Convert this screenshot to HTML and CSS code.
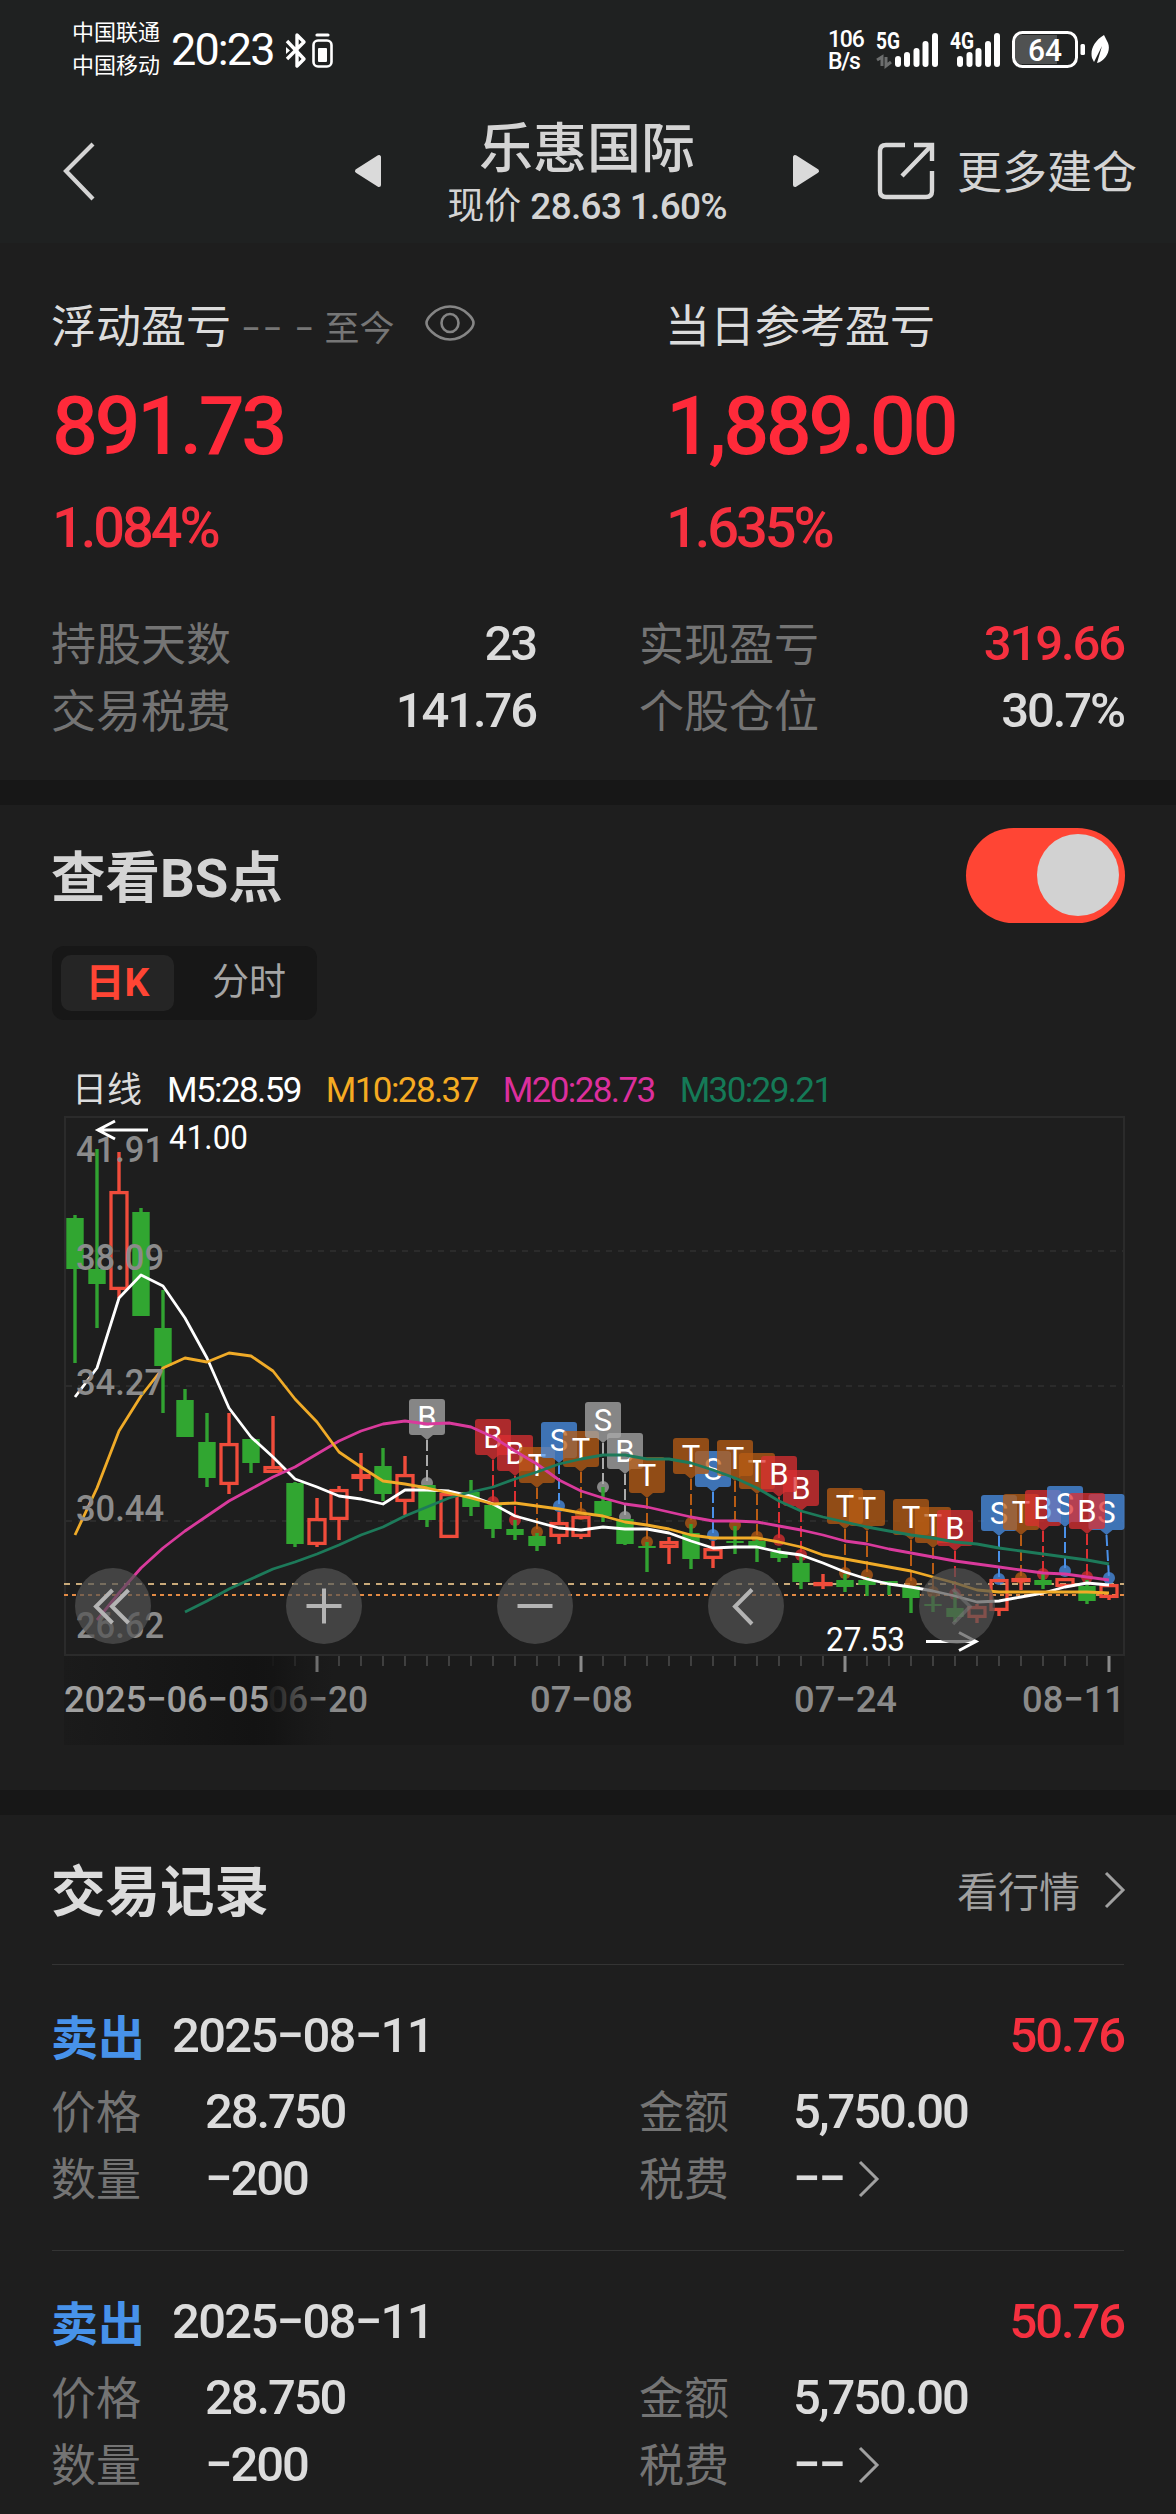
FILE: index.html
```html
<!DOCTYPE html>
<html lang="zh-CN">
<head>
<meta charset="utf-8">
<title>乐惠国际</title>
<link rel="stylesheet" href="styles.css">
</head>
<body>
<div class="page">
  <header class="top">
    <div class="status">
      <div class="carriers"><span>中国联通</span><span>中国移动</span></div>
      <span class="clock">20:23</span>
      <svg class="status-icons" width="50" height="38" viewBox="285 30 50 38" fill="none" stroke="#fff">
        <path d="M287 40 304 58 297 65V34L304 41 287 58" stroke-width="3.4" stroke-linejoin="round"/>
        <path d="M286 46v7l4-3.500z" fill="#fff" stroke="none"/>
        <rect x="313.500" y="39.500" width="18" height="26" rx="4.500" stroke-width="2.600"/>
        <path d="M317 34h11" stroke-width="3.200" stroke-linecap="round"/>
        <rect x="318" y="47" width="9" height="14" rx="1" fill="#fff" stroke="none"/>
      </svg>
      <div class="speed"><span>106</span><span>B/s</span></div>
      <svg class="signals" width="236" height="44" viewBox="874 27 236 44">
        <g fill="#fff">
          <text class="net" x="876" y="49" textLength="24" lengthAdjust="spacingAndGlyphs">5G</text>
          <text class="net" x="950" y="49" textLength="24" lengthAdjust="spacingAndGlyphs">4G</text>
          <g>
            <rect x="895" y="56" width="6" height="11" rx="3"/><rect x="904" y="52" width="6" height="15" rx="3"/><rect x="913.500" y="48" width="6" height="19" rx="3"/><rect x="922.500" y="41" width="6" height="26" rx="3"/><rect x="932" y="33" width="6" height="34" rx="3"/>
          </g>
          <g>
            <rect x="957" y="56" width="6" height="11" rx="3"/><rect x="966.500" y="52" width="6" height="15" rx="3"/><rect x="975.500" y="48" width="6" height="19" rx="3"/><rect x="985" y="41" width="6" height="26" rx="3"/><rect x="994" y="33" width="6" height="34" rx="3"/>
          </g>
          <rect x="1080.500" y="44" width="4.500" height="11" rx="1.500"/>
          <path d="M1104 35C1094 41 1090 50 1092 58L1094 62 1102 46 1097 63C1106 61 1111 50 1108 43Z"/>
        </g>
        <path d="M877 60l5-3v9M891 62l-5 4v-9" fill="none" stroke="#6c6e6e" stroke-width="3"/>
        <path d="M1022 35h35v29h-35q-8 0-8-8v-13q0-8 8-8" fill="#505252"/>
        <rect x="1013.500" y="32.500" width="63" height="34" rx="9" fill="none" stroke="#fff" stroke-width="3"/>
        <text class="level" x="1028" y="61" textLength="34" lengthAdjust="spacingAndGlyphs">64</text>
      </svg>
    </div>
    <nav class="nav">
      <svg width="36" height="60" viewBox="0 0 36 60" fill="none" stroke="#d4d4d4" stroke-width="4.200"><path d="M32 3 5 30 32 58"/></svg>
      <svg class="prev" width="28" height="34" viewBox="0 0 28 34" fill="#dadada" stroke="#dadada" stroke-width="4" stroke-linejoin="round"><path d="M25 3v28L3 17z"/></svg>
      <div class="title"><h1>乐惠国际</h1><p>现价 <span class="num">28.63 1.60%</span></p></div>
      <svg class="next" width="28" height="34" viewBox="0 0 28 34" fill="#dadada" stroke="#dadada" stroke-width="4" stroke-linejoin="round"><path d="M3 3v28L25 17z"/></svg>
      <svg class="share" width="60" height="60" viewBox="0 0 60 60" fill="none" stroke="#d8d8d8" stroke-width="4.400"><path d="M29 4H10Q4 4 4 10V50Q4 56 10 56H50Q56 56 56 50V30M38 4H56V20M56 4 26 35"/></svg>
      <span class="more">更多建仓</span>
    </nav>
  </header>

  <section class="summary">
    <div class="pnl">
      <div>
        <div class="pnl-label">浮动盈亏<span class="since"><span class="dash">−− −</span> 至今</span>
          <svg width="50" height="38" viewBox="0 0 50 38" fill="none" stroke="#858585" stroke-width="2.600"><path d="M1.500 19Q1.500 15 7 10 15 2.500 25 2.500T43 10Q48.500 15 48.500 19T43 28Q35 35.500 25 35.500T7 28Q1.500 23 1.500 19Z"/><ellipse cx="25" cy="19" rx="8.500" ry="9"/></svg>
        </div>
        <div class="amount num">891.73</div>
        <div class="rate num">1.084%</div>
      </div>
      <div>
        <div class="pnl-label">当日参考盈亏</div>
        <div class="amount num">1,889.00</div>
        <div class="rate num">1.635%</div>
      </div>
    </div>
    <dl class="stats">
      <div><dt>持股天数</dt><dd class="num">23</dd></div>
      <div><dt>实现盈亏</dt><dd class="num up">319.66</dd></div>
      <div><dt>交易税费</dt><dd class="num">141.76</dd></div>
      <div><dt>个股仓位</dt><dd class="num">30.7%</dd></div>
    </dl>
  </section>

  <section class="points">
    <div class="points-head"><h2>查看BS点</h2><div class="switch"><i></i></div></div>
    <div class="tabs"><span class="tab active">日K</span><span class="tab">分时</span></div>
    <div class="legend">
      <span class="l0">日线</span><span class="l5 num">M5:28.59</span><span class="l10 num">M10:28.37</span><span class="l20 num">M20:28.73</span><span class="l30 num">M30:29.21</span>
    </div>
    <svg class="chart" id="chart" width="1064" height="632" viewBox="64 1115 1064 632"></svg>
  </section>

  <section class="records">
    <div class="records-head"><h2>交易记录</h2><span class="quote">看行情</span>
      <svg width="22" height="38" viewBox="0 0 22 38" fill="none" stroke="#a0a0a0" stroke-width="3"><path d="M2 2 19 19 2 36"/></svg>
    </div>
    <article class="record">
      <div class="record-head"><b>卖出</b><span class="num date">2025−08−11</span><span class="num up">50.76</span></div>
      <dl>
        <dt>价格</dt><dd class="num">28.750</dd><dt>金额</dt><dd class="num">5,750.00</dd>
        <dt>数量</dt><dd class="num">−200</dd><dt>税费</dt><dd class="num">−−<svg width="22" height="38" viewBox="0 0 22 38" fill="none" stroke="#a0a0a0" stroke-width="3"><path d="M2 2 19 19 2 36"/></svg></dd>
      </dl>
    </article>
    <article class="record">
      <div class="record-head"><b>卖出</b><span class="num date">2025−08−11</span><span class="num up">50.76</span></div>
      <dl>
        <dt>价格</dt><dd class="num">28.750</dd><dt>金额</dt><dd class="num">5,750.00</dd>
        <dt>数量</dt><dd class="num">−200</dd><dt>税费</dt><dd class="num">−−<svg width="22" height="38" viewBox="0 0 22 38" fill="none" stroke="#a0a0a0" stroke-width="3"><path d="M2 2 19 19 2 36"/></svg></dd>
      </dl>
    </article>
  </section>
</div>
<script src="chart.js"></script>
</body>
</html>
```

FILE: styles.css
```css
* { box-sizing: border-box; margin: 0; padding: 0; }
body {
  background: #1e1e1e;
  color: #dcdcdc;
  font-family: Roboto, "Noto Sans CJK SC", sans-serif;
}
svg { display: block; flex: none; }
.page { width: 1176px; height: 2514px; overflow: hidden; }
.num { font-weight: 500; letter-spacing: -0.043em; }
.up { color: #f5303f; }

/* status bar and title */
.top { height: 243px; background: #1f2121; }
.status { display: flex; align-items: center; height: 98px; padding-left: 72px; color: #fff; }
.carriers { display: flex; flex-direction: column; font-size: 22px; line-height: 33px; width: 99px; }
.clock { width: 114px; font-size: 45px; line-height: 48px; padding-top: 2px; letter-spacing: -1.9px; }
.status-icons { margin-top: 2px; }
.speed { display: flex; flex-direction: column; margin-left: 493px; width: 46px; padding-top: 3px; font-size: 23px; line-height: 22px; font-weight: 500; letter-spacing: -1.2px; }
.net { font: 700 23px Roboto, sans-serif; }
.level { font: 500 32px Roboto, sans-serif; fill: #fff; }
.nav { display: flex; align-items: center; height: 145px; padding-left: 61px; color: #d4d4d4; }
.prev { margin-left: 257px; }
.title { width: 410px; text-align: center; padding-top: 13px; }
.title h1 { font-size: 54px; font-weight: 500; line-height: 60px; }
.title p { font-size: 37px; line-height: 54px; }
.title p .num { letter-spacing: -0.7px; }
.share { margin-left: 56px; }
.more { margin-left: 21px; padding-bottom: 2px; font-size: 45px; white-space: nowrap; }

/* profit summary */
.summary { padding: 52px 52px 36px; }
.pnl { display: grid; grid-template-columns: 614px 1fr; }
.pnl-label { display: flex; align-items: center; height: 60px; padding-bottom: 4px; font-size: 45px; text-indent: -1px; }
.since { margin: 4px 31px 0 11px; font-size: 35px; color: #767676; white-space: pre; }
.since .dash { letter-spacing: 1.5px; }
.amount { margin-top: 26px; font-size: 81px; line-height: 92px; height: 90px; color: #ff2a3a; }
.rate { margin-top: 27px; font-size: 56px; line-height: 60px; color: #f5303f; letter-spacing: -0.055em; }
.stats { display: grid; grid-template-columns: 484px 484px; column-gap: 104px; margin-top: 52px; }
.stats div { display: flex; justify-content: space-between; height: 67px; line-height: 67px; }
dt { height: 67px; line-height: 71px; font-size: 45px; color: #747474; text-indent: -1px; }
dd { font-size: 49px; }

/* trade point chart */
.points, .records { border-top: 25px solid #171717; }
.points { padding: 23px 51px 43px 52px; }
.points-head { display: flex; align-items: center; justify-content: space-between; height: 95px; }
h2 { padding-bottom: 4px; font-size: 54.5px; font-weight: 700; color: #d4d4d4; text-indent: -1px; }
.switch { width: 159px; height: 95px; padding: 6px; border-radius: 48px; background: #ff4534; display: flex; justify-content: flex-end; }
.switch i { width: 82px; height: 82px; border-radius: 50%; background: #d2d2d2; }
.tabs { display: flex; width: 265px; height: 74px; margin-top: 23px; padding: 9px; border-radius: 12px; background: #171717; }
.tab { width: 113px; height: 56px; border-radius: 10px; line-height: 56px; font-size: 37px; text-align: center; color: #a5a5a5; }
.tab + .tab { flex: 1; padding-left: 16px; }
.tab.active { background: #252525; color: #ff4534; font-size: 39px; font-weight: 700; }
.legend { display: flex; gap: 25px; height: 50px; margin-top: 45px; padding-left: 20px; line-height: 51px; font-size: 35px; }
.legend .num { font-weight: 400; letter-spacing: -1.6px; }
.l5 { color: #fff; }
.l10 { color: #f5ab22; }
.l20 { color: #dc2f9c; }
.l30 { color: #157a57; }
.chart { margin-left: 12px; font-family: Roboto, sans-serif; }

/* trades */
.records-head { display: flex; align-items: center; height: 149px; padding: 0 50px 0 52px; }
.records-head h2 { color: #dcdcdc; }
.quote { margin: 0 24px 2px auto; font-size: 41px; color: #a0a0a0; }
.record { height: 286px; margin: 0 52px; padding-top: 40px; border-top: 1px solid #343434; }
.record-head { display: flex; align-items: center; height: 60px; font-size: 49px; }
.record-head b { width: 120px; padding-bottom: 1px; font-size: 47px; color: #4792ea; text-indent: -1px; }
.record-head .up { margin-left: auto; }
.record-head .date { letter-spacing: -0.035em; }
.record dl { display: grid; grid-template-columns: 153px 435px 153px 1fr; margin-top: 13px; line-height: 67px; }
.record dd { display: flex; align-items: center; gap: 14px; height: 67px; }
```

FILE: chart.js
```js
const svg = document.getElementById('chart');
const X = i => 75 + 22 * i;
const out = [];
const line = (x1, y1, x2, y2, color, w, extra = '') =>
  out.push(`<line x1="${x1}" y1="${y1}" x2="${x2}" y2="${y2}" stroke="${color}" stroke-width="${w}" ${extra}/>`);
const text = (s, x, y, len, size, color, weight = 400) =>
  out.push(`<text x="${x}" y="${y}" font-size="${size}" font-weight="${weight}" fill="${color}" textLength="${len}" lengthAdjust="spacingAndGlyphs">${s}</text>`);

// frame and grid
out.push('<rect x="65" y="1117" width="1059" height="538" fill="none" stroke="#2b2b2b" stroke-width="2"/>');
[1251, 1386, 1521].forEach(y => line(66, y, 1123, y, '#2b2b2b', 2, 'stroke-dasharray="6 6"'));
line(64, 1584, 1124, 1584, '#c9aa7a', 2, 'stroke-dasharray="6 6"');
line(64, 1595, 1124, 1595, '#e38b45', 2, 'stroke-dasharray="4 4"');

// trade markers: index, letter, colour, top of tag, y of dot
const tint = { g: '#aaaaaa', r: '#dc2f32', o: '#b85c14', b: '#4a90e8' };
const marks = [
  [16,'B','g',1399,1483],[19,'B','r',1419,1502],[20,'B','r',1435,1520],[21,'T','o',1447,1532],
  [22,'S','b',1422,1506],[23,'T','o',1431,1514],[24,'S','g',1402,1487],[25,'B','g',1433,1517],
  [26,'T','o',1457,1542],[29,'S','b',1451,1535],[28,'T','o',1438,1523],[31,'T','o',1453,1537],
  [30,'T','o',1440,1525],[33,'B','r',1470,1555],[32,'B','r',1456,1540],[36,'T','o',1490,1575],
  [35,'T','o',1488,1573],[39,'T','o',1507,1592],[38,'T','o',1499,1583],[40,'B','r',1510,1594],
  [42,'S','b',1495,1579],[43,'T','o',1494,1578],[44,'B','r',1490,1574],[45,'S','b',1486,1571],
  [47,'S','b',1494,1578],[46,'B','r',1493,1577]
];
marks.forEach(([i, t, c, top, dot]) => {
  const x = X(i), bx = i === 47 ? x - 2.5 : x, f = tint[c], b = top + 36;
  line(bx, b + 5, x, dot, f, 2, 'stroke-dasharray="11 4"');
  out.push(`<circle cx="${x}" cy="${dot}" r="6" fill="${f}" opacity=".75"/>`);
  out.push(`<path d="M${bx-15} ${top}h30q3 0 3 3v30q0 3-3 3h-9l-6 5-6-5h-9q-3 0-3-3v-30q0-3 3-3z" fill="${f}" fill-opacity=".75"/>`);
  out.push(`<text x="${bx}" y="${top+28.5}" font-size="31" fill="#fff" text-anchor="middle">${t}</text>`);
});

// candles: colour, high, body top, body bottom, low
const candles = [
  ['g',1215,1218,1269,1363],['g',1149,1269,1284,1328],['r',1152,1191,1290,1298],['g',1208,1212,1316,1316],
  ['g',1290,1328,1366,1413],['g',1389,1400,1437,1437],['g',1413,1442,1478,1487],['r',1413,1443,1485,1494],
  ['g',1439,1439,1463,1473],['r',1416,1466,1473,1473],['g',1482,1483,1544,1547],['r',1498,1518,1545,1547],
  ['r',1486,1489,1520,1540],['r',1453,1474,1479,1491],['g',1448,1466,1494,1501],['r',1456,1474,1502,1515],
  ['g',1485,1485,1520,1527],['r',1493,1493,1538,1538],['g',1480,1492,1507,1516],['g',1505,1505,1529,1538],
  ['g',1520,1529,1535,1540],['g',1533,1536,1546,1551],['r',1512,1522,1537,1544],['r',1516,1516,1537,1539],
  ['g',1487,1501,1516,1522],['g',1519,1519,1544,1545],['g',1542,1546,1548,1572],['r',1537,1541,1548,1564],
  ['g',1524,1533,1559,1569],['r',1541,1548,1559,1568],['g',1526,1541,1543,1554],['g',1538,1541,1547,1562],
  ['g',1548,1552,1558,1562],['g',1556,1563,1582,1589],['r',1574,1582,1585,1589],['g',1574,1580,1587,1592],
  ['g',1577,1580,1585,1596],['g',1581,1581,1583,1595],['g',1586,1586,1598,1613],['g',1596,1604,1606,1612],
  ['g',1592,1608,1617,1622],['r',1604,1606,1618,1623],['r',1579,1579,1611,1616],['r',1578,1578,1581,1590],
  ['g',1574,1580,1585,1589],['r',1578,1578,1587,1587],['g',1580,1586,1601,1604],['r',1584,1584,1598,1600]
];
candles.forEach(([c, h, t, b, l], i) => {
  const x = X(i);
  if (c === 'g') {
    line(x, h, x, l, '#31a231', 3.4);
    out.push(`<rect x="${x-8.7}" y="${t}" width="17.4" height="${b-t}" fill="#31a631"/>`);
  } else {
    if (t > h) line(x, h, x, t, '#f04c3b', 3.4);
    if (l > b) line(x, b, x, l, '#f04c3b', 3.4);
    out.push(`<rect x="${x-8}" y="${t+1.6}" width="16" height="${Math.max(1, b-t-3.2)}" fill="none" stroke="#f04c3b" stroke-width="3.3"/>`);
  }
});

// moving averages
const curve = (start, ys, color) =>
  out.push(`<polyline points="${ys.map((y, k) => X(start + k) + ',' + y).join(' ')}" fill="none" stroke="${color}" stroke-width="2.8" stroke-linejoin="round"/>`);
curve(0, [1397,1368,1298,1275,1286,1318,1358,1408,1437,1457,1479,1487,1496,1499,1504,1490,1490,1491,1496,1504,1516,1522,1528,1530,1527,1529,1529,1533,1541,1548,1547,1547,1552,1555,1563,1572,1579,1584,1587,1591,1596,1602,1601,1597,1593,1587,1583,1585], '#fff');
curve(1, [1620,1593,1568,1548,1531,1516,1501,1489,1477,1467,1454,1441,1431,1424,1421,1424,1423,1427,1437,1451,1464,1480,1491,1498,1504,1507,1512,1517,1521,1521,1522,1526,1530,1535,1541,1544,1549,1553,1557,1561,1564,1567,1570,1573,1574,1577,1580], '#d93a9c');
curve(5, [1612,1601,1589,1579,1569,1562,1554,1545,1535,1527,1516,1507,1498,1492,1487,1479,1472,1464,1459,1455,1455,1459,1459,1463,1470,1478,1488,1501,1511,1517,1522,1527,1531,1535,1538,1542,1544,1548,1551,1554,1557,1560,1564], '#1d7a5a');
curve(0, [1535,1488,1431,1396,1368,1358,1362,1353,1356,1371,1399,1422,1452,1467,1481,1484,1488,1493,1498,1504,1503,1506,1509,1513,1516,1522,1525,1529,1535,1538,1538,1538,1542,1547,1555,1559,1563,1567,1571,1577,1583,1590,1592,1592,1592,1592,1592,1593], '#f0ab28');

// price scale and extremes
[['41.91',1162],['38.09',1270],['34.27',1395],['30.44',1521],['26.62',1638]].forEach(([s, y]) => text(s, 76, y, 88, 37, '#8b8b8b', 500));
text('41.00', 169, 1149, 79, 33, '#fff');
text('27.53', 826, 1651, 79, 33, '#fff');
out.push('<path d="M148 1130H98M115 1121 98 1130 115 1139M926 1641.500H976M959 1632.500 976 1641.500 959 1650.500" fill="none" stroke="#fff" stroke-width="3"/>');

// time axis
out.push('<rect x="64" y="1656" width="1060" height="89" fill="#1b1b1b"/>');
for (let i = 8; i < 48; i++) {
  const major = i % 12 === 11;
  line(X(i), 1656, X(i), major ? 1672 : 1666, major ? '#8a8a8a' : '#5a5a5a', major ? 3 : 1.2);
}
text('06−20', 268, 1712, 100, 37, '#8a8a8a', 500);
text('07−08', 530, 1712, 103, 37, '#8a8a8a', 500);
text('07−24', 794, 1712, 103, 37, '#8a8a8a', 500);
text('08−11', 1022, 1712, 103, 37, '#8a8a8a', 500);
out.push('<defs><linearGradient id="fade"><stop offset="0" stop-color="#1b1b1b"/><stop offset=".7" stop-color="#131313"/><stop offset=".78" stop-color="#131313" stop-opacity=".85"/><stop offset="1" stop-color="#171717" stop-opacity="0"/></linearGradient></defs>');
out.push('<rect x="64" y="1656" width="270" height="89" fill="url(#fade)"/>');
text('2025−06−05', 64, 1712, 205, 37, '#a0a0a0', 500);

// round controls
[113, 324, 535, 746, 957].forEach(x => out.push(`<circle cx="${x}" cy="1606" r="38" fill="#535353" fill-opacity=".7"/>`));
out.push('<path d="M112.500 1590 96 1606.500 112.500 1623M128.500 1590 112 1606.500 128.500 1623M306.500 1606H341.500M324 1588.500V1623.500M517.500 1606H552.500M752 1589.500 735 1606.500 752 1624" fill="none" stroke="#b4b4b4" stroke-width="4"/>');
out.push('<path d="M953 1589.500 970 1606.500 953 1624" fill="none" stroke="#777" stroke-opacity=".6" stroke-width="3.5"/>');
svg.innerHTML = out.join('');
```
